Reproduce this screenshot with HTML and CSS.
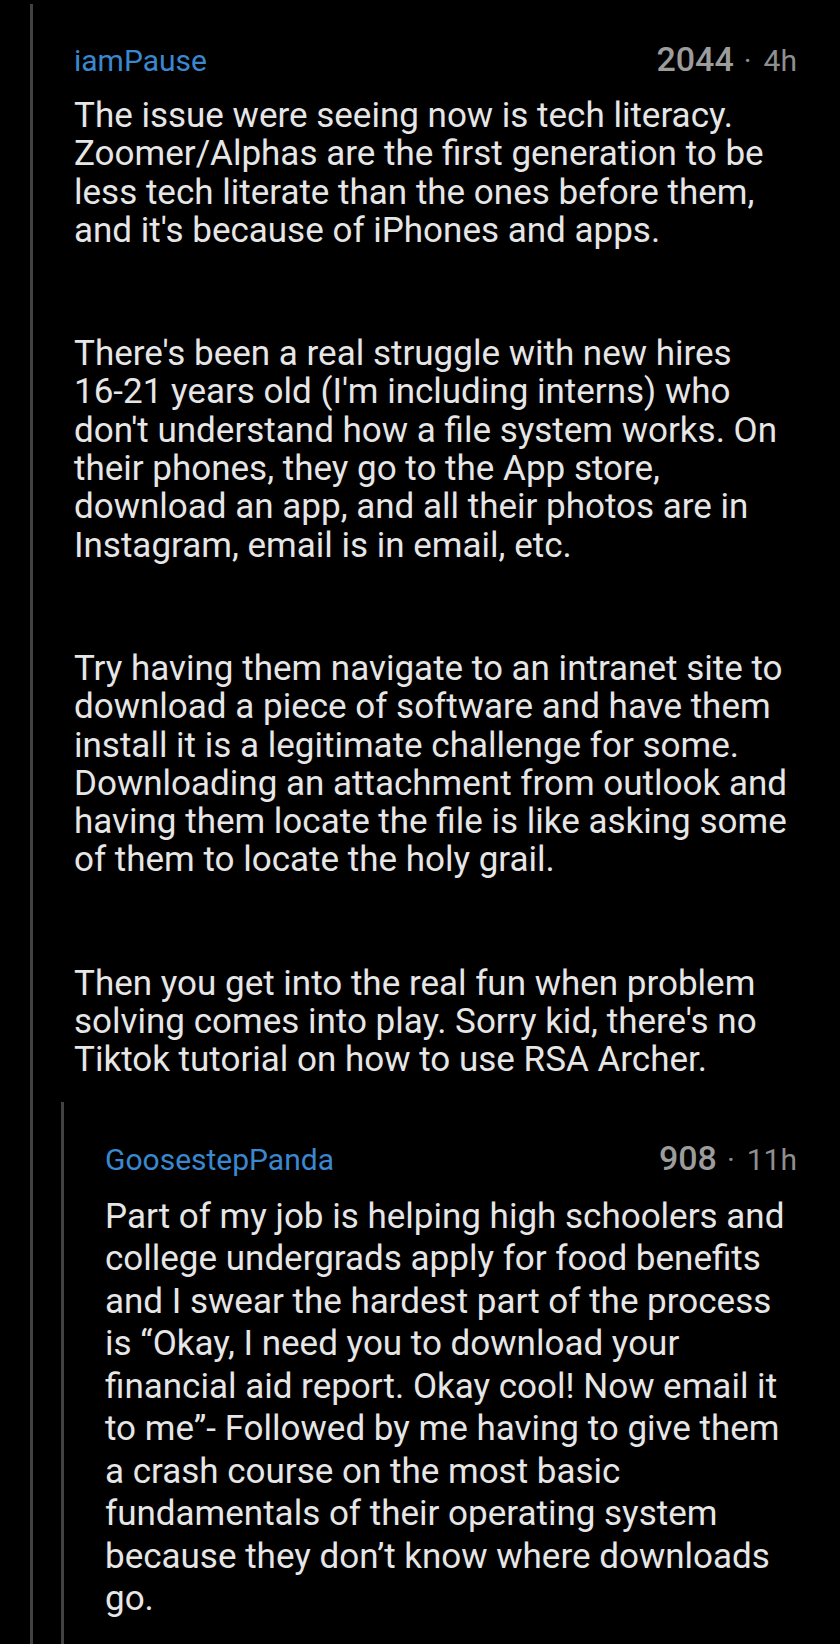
FILE: index.html
```html
<!DOCTYPE html>
<html lang="en">
<head>
    <meta charset="UTF-8">
    <meta name="viewport" content="width=device-width, initial-scale=1.0">
    <title>Comments</title>
    <link rel="stylesheet" href="styles.css">
</head>
<body>
    <div class="thread">
        <div class="comment">
            <div class="comment-head">
                <span class="author">iamPause</span>
                <span class="meta"><span class="score">2044</span><span class="dot">·</span>4h</span>
            </div>
            <div class="comment-body">
                <p>The issue were seeing now is tech literacy. Zoomer/Alphas are the first generation to be less tech literate than the ones before them, and it's because of iPhones and apps.</p>
                <p>There's been a real struggle with new hires <span class="nowrap">16-21</span> years old (I'm including interns) who don't understand how a file system works. On their phones, they go to the App store, download an app, and all their photos are in Instagram, email is in email, etc.</p>
                <p>Try having them navigate to an intranet site to download a piece of software and have them install it is a legitimate challenge for some. Downloading an attachment from outlook and having them locate the file is like asking some of them to locate the holy grail.</p>
                <p>Then you get into the real fun when problem solving comes into play. Sorry kid, there's no Tiktok tutorial on how to use RSA Archer.</p>
            </div>
            <div class="replies">
                <div class="comment">
                    <div class="comment-head">
                        <span class="author">GoosestepPanda</span>
                        <span class="meta"><span class="score">908</span><span class="dot">·</span>11h</span>
                    </div>
                    <div class="comment-body">
                        <p>Part of my job is helping high schoolers and college undergrads apply for food benefits and I swear the hardest part of the process is “Okay, I need you to download your financial aid report. Okay cool! Now email it to me”- Followed by me having to give them a crash course on the most basic fundamentals of their operating system because they don’t know where downloads go.</p>
                    </div>
                </div>
            </div>
        </div>
    </div>
</body>
</html>
```

FILE: styles.css
```css
html, body { height: 100%; }
body { margin: 0; background-color: #000; color: #e6e6e6; font-family: Roboto, "Noto Sans", sans-serif; overflow: hidden; }
.thread { padding: 4px 0 0 30px; min-height: 100%; box-sizing: border-box; display: flex; flex-direction: column; }
.comment { border-left: 3px solid #424242; display: flex; flex-direction: column; flex: 1; padding-top: 35px; }
.comment-head { display: flex; justify-content: space-between; align-items: baseline; padding: 0 43px 0 41px; line-height: 40px; }
.author { font-size: 30px; color: #3a88cf; }
.meta { font-size: 30px; color: #8f8f8f; }
.score { font-size: 34px; font-weight: 500; color: #9c9c9c; }
.dot { margin: 0 12px 0 10px; }
.comment-body { padding: 16px 46px 0 41px; font-size: 35px; line-height: 38.3px; }
.comment-body p { margin: 0 0 85px; }
.comment-body p:last-child { margin-bottom: 0; }
.nowrap { white-space: nowrap; }
.replies { display: flex; flex-direction: column; flex: 1; padding: 22px 0 0 28px; }
.replies .comment { padding-top: 36px; }
.replies .comment-body { line-height: 42.5px; }
```
